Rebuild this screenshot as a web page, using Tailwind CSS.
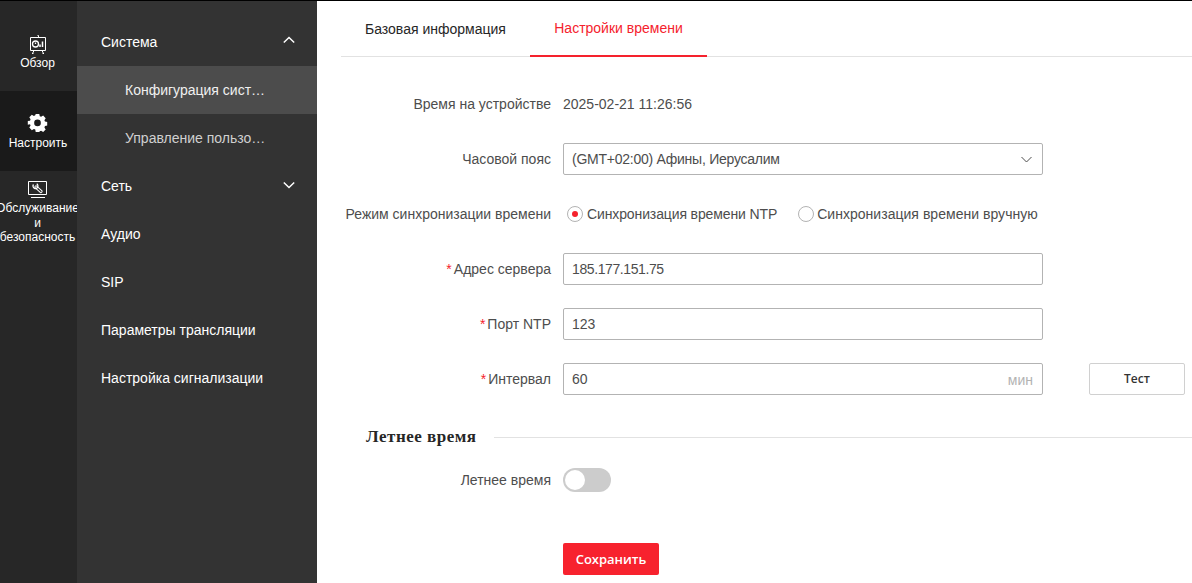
<!DOCTYPE html>
<html lang="ru">
<head>
<meta charset="utf-8">
<script src="https://cdn.jsdelivr.net/npm/@tailwindcss/browser@4"></script>
<title>Настройки времени</title>
</head>
<body class="h-[583px] w-[1192px] overflow-hidden bg-white font-['Liberation_Sans',Arial,sans-serif] text-sm">
<div class="flex h-[583px] border-t border-black">
  <aside class="w-[77px] shrink-0 overflow-hidden bg-[#272727] pt-[10px] text-xs text-white">
    <div class="flex h-20 w-[75px] flex-col items-center pt-[24px]">
      <svg class="h-[20px] w-[20px] shrink-0" viewBox="0 0 20 20" fill="none" stroke="#fff">
        <path d="M9.500 .5h1v2M2.500 2.500h15v13h-15zM6 15.500l-1.500 3M14 15.500l1.500 3M4 18.500h1.500M14.500 18.500h1.500"/>
        <circle cx="7.500" cy="9" r="3" stroke-width="1.300"/>
        <path d="M7.500 9v-1.500" stroke-width="1.300"/>
        <path d="M12 9.500v2.500M14.500 6.500v5.500" stroke-width="1.500"/>
      </svg>
      <span class="mt-[1px] leading-[15px]">Обзор</span>
    </div>
    <div class="flex h-20 w-[77px] flex-col bg-[#1a1a1a] pr-[1px] pt-[21px]">
      <div class="flex flex-col items-center">
        <svg class="h-[20px] w-[20px] shrink-0 -translate-x-[0.5px]" viewBox="0 0 20 20" fill="#fff">
          <path fill-rule="evenodd" d="M8 1h4l.5 2.600 1.500.7 2.300-1.400 2.800 2.900-1.400 2.200.6 1.500 2.700.5v4l-2.700.5-.6 1.500 1.400 2.200-2.800 2.900-2.300-1.400-1.500.7L12 21H8l-.5-2.600-1.500-.7-2.300 1.400-2.800-2.900 1.400-2.200-.6-1.500L-1 13V9l2.700-.5.6-1.500-1.400-2.200 2.800-2.900L6 3.300l1.500-.7zM10 7.300a3.700 3.700 0 1 0 0 7.400 3.700 3.700 0 0 0 0-7.400z" transform="translate(1 1) scale(.9)"/>
        </svg>
        <span class="mt-[4px] leading-[15px]">Настроить</span>
      </div>
    </div>
    <div class="flex w-[75px] flex-col items-center pt-[9px]">
      <svg class="h-[20px] w-[20px] shrink-0" viewBox="0 0 20 20" fill="none" stroke="#fff">
        <path d="M.5 1.500h18v13H.5zM3 17.500h14"/>
        <path d="M8 7l5 4.500" stroke-width="3.200" stroke-linecap="round"/>
        <path d="M8 7l5 4.500" stroke="#272727" stroke-width="1.200" stroke-linecap="round"/>
        <path d="M5.500 4.500a2.500 2.500 0 0 0 1 3.800 2.500 2.500 0 0 0 3-1 2.500 2.500 0 0 0-.8-3.500" stroke-width="1.300"/>
      </svg>
      <span class="mt-[1px] whitespace-nowrap leading-[14.500px]">Обслуживание</span>
      <span class="leading-[14.500px]">и</span>
      <span class="whitespace-nowrap leading-[14.500px]">безопасность</span>
    </div>
  </aside>

  <nav class="w-[240px] shrink-0 bg-[#333333] pt-[17px] text-white">
    <div class="flex h-12 items-center justify-between pl-6 pr-[22px]">
      <span>Система</span>
      <svg class="mb-[4px] h-[8px] w-[12px]" viewBox="0 0 12 8" fill="none" stroke="#fff" stroke-width="1.500"><path d="M.8 6.500 6 1.500l5.200 5"/></svg>
    </div>
    <div class="flex h-12 items-center bg-[#4c4c4c] pl-12 text-[#f0f0f0]">Конфигурация сист…</div>
    <div class="flex h-12 items-center pl-12 text-[#d0d0d0]">Управление пользо…</div>
    <div class="flex h-12 items-center justify-between pl-6 pr-[22px]">
      <span>Сеть</span>
      <svg class="mb-[2px] h-[8px] w-[12px]" viewBox="0 0 12 8" fill="none" stroke="#fff" stroke-width="1.500"><path d="M.8 1.500 6 6.500l5.200-5"/></svg>
    </div>
    <div class="flex h-12 items-center pl-6">Аудио</div>
    <div class="flex h-12 items-center pl-6">SIP</div>
    <div class="flex h-12 items-center pl-6">Параметры трансляции</div>
    <div class="flex h-12 items-center pl-6">Настройка сигнализации</div>
  </nav>

  <main class="min-w-0 flex-1 pl-6 text-[#4d4d4d]">
    <div class="flex h-[56px] border-b border-[#e2e2e2]">
      <div class="flex h-[56px] w-[189px] items-center pb-[1px] pl-6 text-[#262626]">Базовая информация</div>
      <div class="flex h-[56px] w-[177px] items-center justify-center border-b-2 border-[#f5222d] pb-[1px] text-[#f5222d]">Настройки времени</div>
    </div>

    <div class="flex flex-col gap-[23px] pt-[31px]">
      <div class="flex h-8 items-center">
        <label class="w-[210px] text-right">Время на устройстве</label>
        <span class="ml-3">2025-02-21 11:26:56</span>
      </div>
      <div class="flex h-8 items-center">
        <label class="w-[210px] text-right">Часовой пояс</label>
        <div class="ml-3 flex h-8 w-[480px] items-center justify-between rounded-[2px] border border-[#b3b3b3] pl-2 pr-[10px]">
          <span class="tracking-[-0.25px]">(GMT+02:00) Афины, Иерусалим</span>
          <svg class="h-[7px] w-[11px]" viewBox="0 0 11 7" fill="none" stroke="#4d4d4d"><path d="M.5 1 5.500 6l5-5"/></svg>
        </div>
      </div>
      <div class="flex h-8 items-center">
        <label class="w-[210px] whitespace-nowrap text-right">Режим синхронизации времени</label>
        <span class="ml-[16px] flex h-4 w-4 items-center justify-center rounded-full border border-[#b3b3b3]"><span class="h-[6px] w-[6px] rounded-full bg-[#f5222d]"></span></span>
        <span class="ml-1 tracking-[-0.12px]">Синхронизация времени NTP</span>
        <span class="ml-[21px] h-4 w-4 rounded-full border border-[#b3b3b3]"></span>
        <span class="ml-[3px] tracking-[0.03px]">Синхронизация времени вручную</span>
      </div>
      <div class="flex h-8 items-center">
        <label class="w-[210px] text-right"><span class="mr-[2px] text-[#f5222d]">*</span>Адрес сервера</label>
        <div class="ml-3 flex h-8 w-[480px] items-center rounded-[2px] border border-[#b3b3b3] pl-2 tracking-[-0.4px]">185.177.151.75</div>
      </div>
      <div class="flex h-8 items-center">
        <label class="w-[210px] text-right"><span class="mr-[2px] text-[#f5222d]">*</span>Порт NTP</label>
        <div class="ml-3 flex h-8 w-[480px] items-center rounded-[2px] border border-[#b3b3b3] pl-2">123</div>
      </div>
      <div class="flex h-8 items-center">
        <label class="w-[210px] text-right"><span class="mr-[2px] text-[#f5222d]">*</span>Интервал</label>
        <div class="ml-3 flex h-8 w-[480px] items-center justify-between rounded-[2px] border border-[#b3b3b3] pl-2 pr-[9px]">
          <span>60</span>
          <span class="pt-[2px] text-[#b3b3b3]">мин</span>
        </div>
        <button class="ml-[46px] h-8 w-24 rounded-[2px] border border-[#d0d0d0] font-['Open_Sans',sans-serif] text-xs font-semibold text-[#333]">Тест</button>
      </div>
    </div>

    <div class="mt-[31px] flex h-[22px] items-center pl-[25px]">
      <h2 class="font-['Liberation_Serif',serif] text-[17px] font-bold tracking-[0.5px] text-[#262626]">Летнее время</h2>
      <div class="ml-[17px] h-px flex-1 bg-[#e2e2e2]"></div>
    </div>

    <div class="mt-[20px] flex h-6 items-center">
      <label class="w-[210px] text-right">Летнее время</label>
      <span class="ml-3 flex h-6 w-12 items-center rounded-full bg-[#cccccc] pl-[2px]"><span class="h-5 w-5 rounded-full bg-white"></span></span>
    </div>

    <button class="ml-[222px] mt-[51px] h-8 w-24 rounded-[2px] bg-[#f7222e] font-['Open_Sans',sans-serif] text-[13px] font-semibold text-white">Сохранить</button>
  </main>
</div>
</body>
</html>
